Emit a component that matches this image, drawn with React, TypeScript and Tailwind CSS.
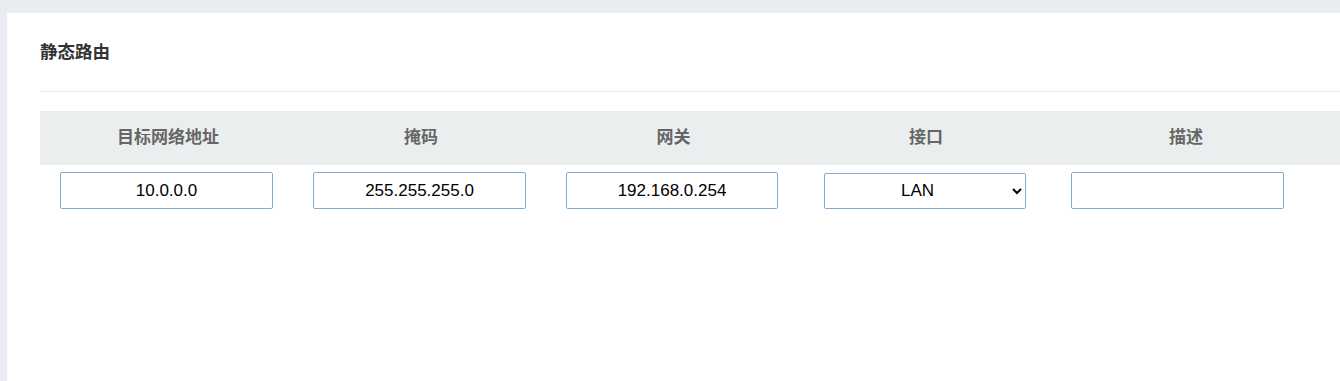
import { useState } from 'react';

const cols = ['目标网络地址', '掩码', '网关', '接口', '描述'];

export default function App() {
  const [iface, setIface] = useState('LAN');

  return (
    <div className="h-[381px] overflow-hidden bg-[#e9edf2] pt-[13px] pl-[7px] font-['Liberation_Sans','Noto_Sans_CJK_SC',sans-serif]">
      <div className="h-full bg-white pl-[33px]">
        {/* Title */}
        <div className="flex h-[79px] items-center border-b border-[#e8e8e8]">
          <h2 className="text-[17.5px] font-bold text-[#333]">静态路由</h2>
        </div>

        {/* Table */}
        <div className="mt-[19px]">
          <div className="grid h-[54px] grid-cols-[253px_253px_252px_253px_267px_1fr] items-center bg-[#ebeeef]">
            {cols.map((c) => (
              <div key={c} className="pl-[3px] text-center text-[17px] font-bold text-[#666]">
                {c}
              </div>
            ))}
            <div />
          </div>

          <div className="grid grid-cols-[253px_253px_252px_253px_267px_1fr] items-center pt-[7px] text-[17px] text-black">
            <div className="flex justify-center">
              <input
                defaultValue="10.0.0.0"
                className="h-[37px] w-[213px] rounded-[2px] border border-[#80aad9] text-center outline-none"
              />
            </div>
            <div className="flex justify-center">
              <input
                defaultValue="255.255.255.0"
                className="h-[37px] w-[213px] rounded-[2px] border border-[#80aad9] text-center outline-none"
              />
            </div>
            <div className="flex justify-center">
              <input
                defaultValue="192.168.0.254"
                className="h-[37px] w-[212px] rounded-[2px] border border-[#80aad9] text-center outline-none"
              />
            </div>
            <div className="flex justify-center">
              <select
                value={iface}
                onChange={(e) => setIface(e.target.value)}
                className="h-[36px] w-[202px] rounded-[2px] border border-[#80aad9] bg-white pr-[2px] [text-align-last:center] outline-none"
              >
                <option>LAN</option>
                <option>WAN</option>
              </select>
            </div>
            <div className="pl-[20px]">
              <input
                defaultValue=""
                className="h-[37px] w-[213px] rounded-[2px] border border-[#80aad9] text-center outline-none"
              />
            </div>
            <div />
          </div>
        </div>
      </div>
    </div>
  );
}
